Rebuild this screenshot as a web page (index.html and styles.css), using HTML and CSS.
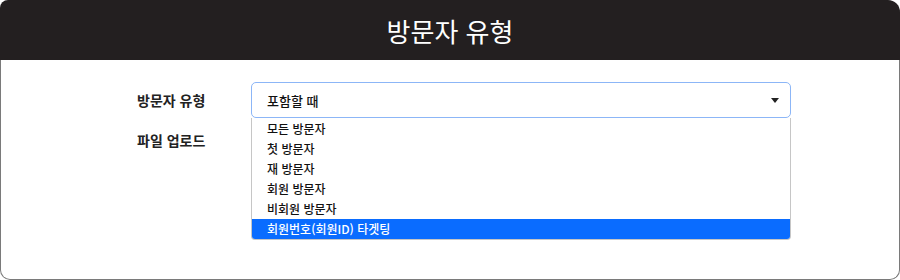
FILE: index.html
```html
<!DOCTYPE html>
<html lang="ko">
<head>
    <meta charset="UTF-8">
    <meta name="viewport" content="width=device-width, initial-scale=1.0">
    <title>방문자 유형</title>
    <link rel="stylesheet" href="styles.css">
</head>
<body>
    <div class="modal">
        <div class="modal-header">
            <h1>방문자 유형</h1>
        </div>

        <div class="modal-body">
            <div class="form-row">
                <label class="form-label">방문자 유형</label>
                <div class="select-wrap">
                    <div class="select-box">
                        <span>포함할 때</span>
                        <span class="select-arrow"></span>
                    </div>
                    <ul class="select-list">
                        <li>모든 방문자</li>
                        <li>첫 방문자</li>
                        <li>재 방문자</li>
                        <li>회원 방문자</li>
                        <li>비회원 방문자</li>
                        <li class="active">회원번호(회원ID) 타겟팅</li>
                    </ul>
                </div>
            </div>

            <div class="form-row">
                <label class="form-label">파일 업로드</label>
                <div></div>
            </div>
        </div>
    </div>
</body>
</html>
```

FILE: styles.css
```css
body {
    margin: 0;
    font-family: "Noto Sans CJK KR", "Noto Sans", sans-serif;
    background-color: #ffffff;
}

.modal {
    width: 900px;
    height: 280px;
    box-sizing: border-box;
    display: flex;
    flex-direction: column;
}

.modal-header {
    height: 60px;
    background-color: #231f20;
    border-radius: 8px 12px 0 0;
    display: flex;
    align-items: center;
    justify-content: center;
}

.modal-header h1 {
    margin: 0;
    color: #ffffff;
    font-size: 26px;
    font-weight: 400;
}

.modal-body {
    flex: 1;
    border: 1px solid #7a7a7a;
    border-top: none;
    border-radius: 0 0 10px 10px;
    padding: 22px 0 0 136px;
}

.form-row {
    display: grid;
    grid-template-columns: 114px 540px;
    align-items: center;
    height: 36px;
    margin-bottom: 4px;
}

.form-label {
    font-size: 14px;
    font-weight: 600;
    color: #222222;
}

.select-wrap {
    position: relative;
}

.select-box {
    height: 36px;
    box-sizing: border-box;
    border: 1px solid #8cb6f7;
    border-radius: 5px;
    padding: 0 11px 0 15px;
    display: flex;
    align-items: center;
    justify-content: space-between;
    font-size: 13px;
    font-weight: 500;
    color: #111111;
}

.select-arrow {
    width: 0;
    height: 0;
    border-left: 4px solid transparent;
    border-right: 4px solid transparent;
    border-top: 5px solid #222222;
}

/* 드롭다운 목록 */
.select-list {
    position: absolute;
    top: 36px;
    left: 0;
    width: 540px;
    box-sizing: border-box;
    margin: 0;
    padding: 1px 0 0;
    list-style: none;
    background-color: #ffffff;
    border: 1px solid #c6c6c6;
    border-top: none;
    border-radius: 0 0 4px 4px;
    overflow: hidden;
}

.select-list li {
    height: 20px;
    line-height: 20px;
    padding-left: 15px;
    font-size: 12px;
    font-weight: 500;
    color: #111111;
}

.select-list li.active {
    background-color: #0a6cff;
    color: #ffffff;
}
```
